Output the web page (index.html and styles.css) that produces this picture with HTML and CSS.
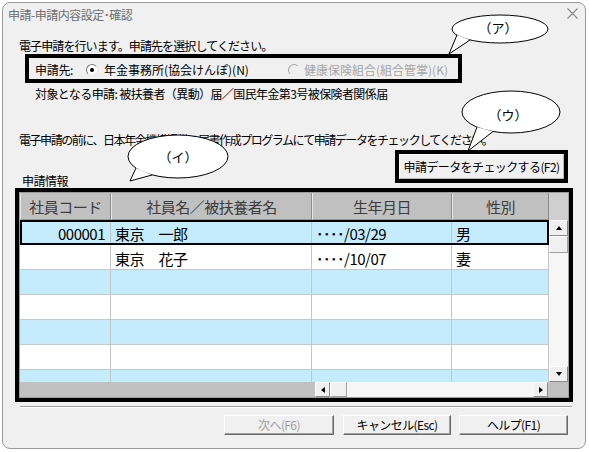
FILE: index.html
```html
<!DOCTYPE html>
<html lang="ja">
<head>
<meta charset="utf-8">
<title>申請-申請内容設定･確認</title>
<link rel="stylesheet" href="styles.css">
</head>
<body>
<div class="dialog">
  <div class="titlebar">
    <span class="title">申請-申請内容設定･確認</span>
    <svg class="close" width="11" height="11" viewBox="0 0 11 11"><path d="M0.5 0.5L10.5 10.5M10.5 0.5L0.5 10.5" stroke="#8a8a8a" stroke-width="1.1" fill="none"/></svg>
  </div>
  <p class="intro">電子申請を行います。申請先を選択してください。</p>
  <div class="dest-box">
    <span class="dest-label">申請先:</span>
    <span class="radio opt1"><span class="radio-dot on"></span>年金事務所(協会けんぽ)(N)</span>
    <span class="radio opt2 disabled"><span class="radio-dot"></span>健康保険組合(組合管掌)(K)</span>
  </div>
  <p class="target">対象となる申請: 被扶養者（異動）届／国民年金第3号被保険者関係届</p>
  <p class="notice">電子申請の前に、日本年金機構提供の届書作成プログラムにて申請データをチェックしてください。</p>
  <div class="check-row">
    <span class="section-label">申請情報</span>
    <div class="check-box"><button class="btn check-btn">申請データをチェックする(F2)</button></div>
  </div>
  <div class="grid-box">
    <div class="grid-inner">
      <div class="grid-main">
        <div class="cols">
          <div class="row head">
            <div class="cell c1">社員コード</div>
            <div class="cell c2">社員名／被扶養者名</div>
            <div class="cell c3">生年月日</div>
            <div class="cell c4">性別</div>
          </div>
          <div class="row blue selected">
            <div class="cell c1 num">000001</div>
            <div class="cell c2">東京　一郎</div>
            <div class="cell c3">････/03/29</div>
            <div class="cell c4">男</div>
          </div>
          <div class="row white">
            <div class="cell c1 num"></div>
            <div class="cell c2">東京　花子</div>
            <div class="cell c3">････/10/07</div>
            <div class="cell c4">妻</div>
          </div>
          <div class="row blue"><div class="cell c1"></div><div class="cell c2"></div><div class="cell c3"></div><div class="cell c4"></div></div>
          <div class="row white"><div class="cell c1"></div><div class="cell c2"></div><div class="cell c3"></div><div class="cell c4"></div></div>
          <div class="row blue"><div class="cell c1"></div><div class="cell c2"></div><div class="cell c3"></div><div class="cell c4"></div></div>
          <div class="row white"><div class="cell c1"></div><div class="cell c2"></div><div class="cell c3"></div><div class="cell c4"></div></div>
          <div class="row blue"><div class="cell c1"></div><div class="cell c2"></div><div class="cell c3"></div><div class="cell c4"></div></div>
        </div>
        <div class="vscroll">
          <div class="vhead"></div>
          <div class="sbtn vbtn"><span class="tri up"></span></div>
          <div class="thumb vthumb"></div>
          <div class="track"></div>
          <div class="sbtn vbtn"><span class="tri down"></span></div>
        </div>
      </div>
      <div class="hscroll">
        <div class="hs-fixed"></div>
        <div class="sbtn hbtn"><span class="tri left"></span></div>
        <div class="thumb hthumb"></div>
        <div class="track"></div>
        <div class="sbtn hbtn"><span class="tri right"></span></div>
        <div class="hs-corner"></div>
      </div>
    </div>
  </div>
  <div class="sep"></div>
  <div class="buttons">
    <button class="btn foot-btn w1" disabled>次へ(F6)</button>
    <button class="btn foot-btn w2">キャンセル(Esc)</button>
    <button class="btn foot-btn w3">ヘルプ(F1)</button>
  </div>
</div>

<svg class="annot" width="589" height="452" viewBox="0 0 589 452">
  <g fill="#fff" stroke="#000" stroke-width="1">
    <ellipse cx="500" cy="29" rx="48" ry="14"/>
    <polygon points="457,35 449,54 470,40" stroke="none"/>
    <polyline points="457,35 449,54 470,40" fill="none"/>

    <ellipse cx="511" cy="112" rx="49" ry="21"/>
    <polygon points="477,127 468,151 493,131.5" stroke="none"/>
    <polyline points="477,127 468,151 493,131.5" fill="none"/>

    <ellipse cx="178" cy="156.5" rx="50" ry="21.5"/>
    <polygon points="136,168 130,181 152,175" stroke="none"/>
    <polyline points="136,168 130,181 152,175" fill="none"/>
  </g>
  <g class="annot-text" fill="#000">
    <text x="498" y="33" text-anchor="middle">（ア）</text>
    <text x="508" y="120" text-anchor="middle">（ウ）</text>
    <text x="178" y="162" text-anchor="middle">（イ）</text>
  </g>
</svg>
</body>
</html>
```

FILE: styles.css
```css
* { box-sizing: border-box; }
html, body { margin: 0; padding: 0; }
body {
  background: #fff;
  font-family: "Noto Sans CJK JP", "Noto Sans", sans-serif;
  font-size: 12px;
  color: #000;
  width: 589px;
  height: 452px;
  overflow: hidden;
  position: relative;
}
.dialog {
  margin: 2px 0 0 2px;
  width: 584px;
  height: 447px;
  border: 1px solid #9a9a9a;
  border-radius: 8px;
  background: #f0f0f0;
  display: flex;
  flex-direction: column;
}
.titlebar {
  height: 23px;
  flex: none;
  display: flex;
  align-items: center;
  justify-content: space-between;
  padding-left: 5px;
  padding-right: 7px;
}
.title {
  color: #6e6e6e;
  letter-spacing: -0.5px;
  line-height: 16px;
  padding-top: 1px;
}
.close { align-self: flex-start; margin-top: 5px; }

.intro, .target, .notice {
  line-height: 16px;
  white-space: nowrap;
  flex: none;
}
.intro { margin: 12px 0 0 16px; letter-spacing: -0.9px; }
.dest-box {
  flex: none;
  margin: 0 0 0 22px;
  width: 437px;
  height: 29px;
  border: 4px solid #000;
  display: flex;
  align-items: center;
  padding: 2px 0 0 6px;
  white-space: nowrap;
}
.dest-label { width: 51px; letter-spacing: -0.3px; }
.radio { display: flex; align-items: center; letter-spacing: 0; }
.opt1 { width: 202px; }
.disabled { color: #a6a6a6; }
.radio-dot {
  width: 12px;
  height: 12px;
  border-radius: 50%;
  border: 1px solid;
  border-color: #7a7a7a #e6e6e6 #e6e6e6 #7a7a7a;
  background: #fff;
  margin-right: 6px;
  display: flex;
  align-items: center;
  justify-content: center;
  flex: none;
}
.radio-dot.on::after {
  content: "";
  width: 4px;
  height: 4px;
  border-radius: 50%;
  background: #000;
}
.disabled .radio-dot {
  border-color: #a8a8a8 #f4f4f4 #f4f4f4 #a8a8a8;
  background: #f0f0f0;
  margin-right: 4px;
}
.target { margin: 3px 0 0 32px; letter-spacing: -0.6px; }
.notice { margin: 30px 0 0 16px; letter-spacing: -1.45px; }

.check-row {
  flex: none;
  display: flex;
  justify-content: space-between;
  align-items: flex-end;
  margin-top: 2px;
  height: 38px;
  padding: 0 17px 0 19px;
}
.section-label { line-height: 14px; letter-spacing: -0.5px; }
.check-box {
  align-self: flex-start;
  width: 173px;
  height: 33px;
  border: 4px solid #000;
}
.btn {
  font-family: inherit;
  font-size: 12px;
  color: #000;
  background: #f0f0f0;
  border: 1px solid;
  border-color: #fff #6a6a6a #6a6a6a #fff;
  box-shadow: inset -1px -1px 0 #a0a0a0;
  padding: 0;
  letter-spacing: -0.6px;
  line-height: 16px;
  white-space: nowrap;
}
.check-btn { width: 100%; height: 100%; border-color: #fbfbfb #b8b8b8 #b8b8b8 #fbfbfb; box-shadow: none; }

.grid-box {
  flex: none;
  margin-left: 12px;
  width: 558px;
  height: 214px;
  border: 4px solid #000;
}
.grid-inner {
  height: 100%;
  border: 1px solid #9d9d9d;
  display: flex;
  flex-direction: column;
  background: #c0c0c0;
}
.grid-main { display: flex; height: 189px; flex: none; }
.cols { width: 529px; overflow: hidden; font-size: 15px; }
.row { display: flex; height: 25px; }
.row.head { height: 27px; background: #c0c0c0; color: #3c3c3c; }
.row.blue { background: #c5ecfc; }
.row.white { background: #fff; }
.row.selected { outline: 2px solid #000; outline-offset: -2px; }
.cell {
  height: 100%;
  border-right: 1px solid #c6c6c6;
  border-bottom: 1px solid #c6c6c6;
  display: flex;
  align-items: center;
  padding: 3px 0 0 4px;
  white-space: nowrap;
  letter-spacing: -0.5px;
}
.head .cell {
  justify-content: center;
  padding: 1px 0 0 0;
  border-right: 1px solid #8e8e8e;
  border-left: 1px solid #e6e6e6;
  border-bottom: 1px solid #9a9a9a;
}
.cell.num { justify-content: flex-end; padding-right: 5px; }
.c1 { width: 91px; }
.c2 { width: 201px; }
.c3 { width: 140px; }
.c4 { width: 97px; }

.vscroll { width: 19px; display: flex; flex-direction: column; background: #f4f4f4; }
.vhead { height: 27px; background: #cfcfcf; flex: none; }
.sbtn {
  flex: none;
  background: #f0f0f0;
  border: 1px solid;
  border-color: #fff #8a8a8a #8a8a8a #fff;
  display: flex;
  align-items: center;
  justify-content: center;
}
.vbtn { height: 16px; }
.thumb {
  flex: none;
  background: #f0f0f0;
  border: 1px solid;
  border-color: #fff #a0a0a0 #a0a0a0 #fff;
}
.vthumb { height: 17px; }
.track { flex: 1; background: #f6f6f6; }
.tri { width: 0; height: 0; }
.tri.up { border-left: 3.5px solid transparent; border-right: 3.5px solid transparent; border-bottom: 4px solid #000; }
.tri.down { border-left: 3.5px solid transparent; border-right: 3.5px solid transparent; border-top: 4px solid #000; }
.tri.left { border-top: 3.5px solid transparent; border-bottom: 3.5px solid transparent; border-right: 4px solid #000; }
.tri.right { border-top: 3.5px solid transparent; border-bottom: 3.5px solid transparent; border-left: 4px solid #000; }

.hscroll { display: flex; height: 15px; flex: none; }
.hs-fixed { width: 295px; background: #c0c0c0; flex: none; }
.hbtn { width: 15px; }
.hthumb { width: 17px; }
.hs-corner { width: 20px; background: #c0c0c0; flex: none; }

.sep {
  flex: none;
  margin: 4px 0 0 17px;
  width: 552px;
  height: 2px;
  border-top: 1px solid #a0a0a0;
  border-bottom: 1px solid #fff;
}
.buttons {
  flex: none;
  display: flex;
  justify-content: flex-end;
  margin-top: 7px;
  padding-right: 17px;
}
.foot-btn { height: 20px; }
.foot-btn[disabled] { color: #a0a0a0; }
.w1 { width: 110px; margin-right: 9px; }
.w2 { width: 108px; margin-right: 8px; }
.w3 { width: 109px; }

.annot {
  position: absolute;
  left: 0;
  top: 0;
  pointer-events: none;
}
.annot-text {
  font-family: "Noto Sans CJK JP", sans-serif;
  font-size: 13px;
}
```
